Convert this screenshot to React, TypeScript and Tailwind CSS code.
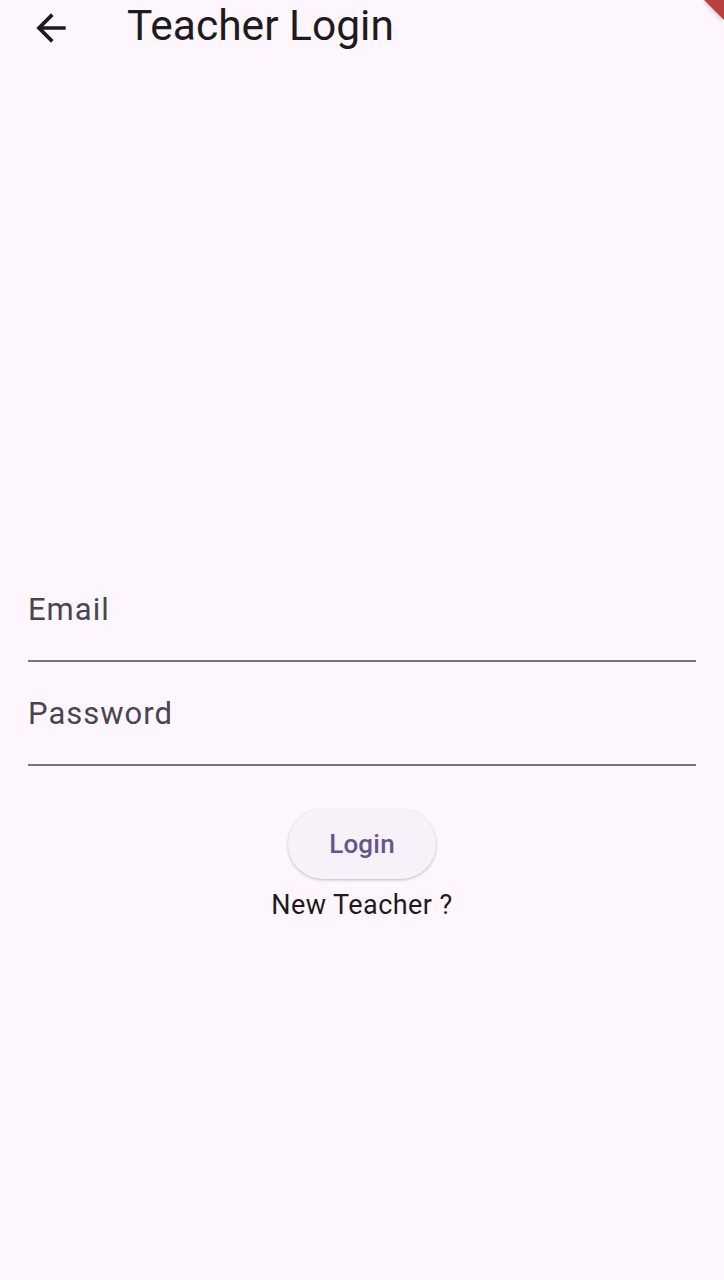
const Field = ({ label, first }: { label: string; first?: boolean }) => (
  <div
    className={`border-b-2 border-[#79747e] ${first ? "h-[96px] pt-[28px]" : "h-[104px] pt-[36px]"}`}
  >
    <div className="text-[31px] leading-none tracking-[1px] text-[#49454f]">{label}</div>
  </div>
);

const App = () => {
  return (
    <div
      className="relative min-h-[1280px] w-full overflow-hidden bg-[#fdf7fd]"
      style={{ fontFamily: "Roboto, 'Noto Sans', sans-serif" }}
    >
      {/* App bar */}
      <header className="flex items-start pt-[5px]">
        <button className="ml-[29px] mt-[1px] h-[44px] w-[44px] text-[#1d1b20]">
          <svg viewBox="0 0 24 24" className="h-[44px] w-[44px]" fill="currentColor">
            <path d="M20 11H7.83l5.59-5.59L12 4l-8 8 8 8 1.41-1.41L7.83 13H20v-2z" />
          </svg>
        </button>
        <h1 className="ml-[54px] text-[42.5px] leading-none text-[#1d1b20]">Teacher Login</h1>
      </header>

      {/* Form */}
      <main className="mt-[516px] px-[28px]">
        <Field label="Email" first />
        <Field label="Password" />

        <div className="flex flex-col items-center">
          <button className="mt-[43px] h-[70px] w-[148px] rounded-full bg-[#f7f1fa] text-[26px] font-medium tracking-[0.2px] text-[#65558f] shadow-[0_1px_3px_rgba(0,0,0,0.25)]">
            Login
          </button>
          <p className="mt-[13px] text-[27px] leading-none tracking-[0.45px] text-[#1d1b20]">
            New Teacher ?
          </p>
        </div>
      </main>

      {/* Debug banner corner */}
      <svg
        className="absolute right-0 top-0 h-[20px] w-[20px]"
        viewBox="0 0 20 20"
        style={{ filter: "drop-shadow(-1px 1px 2px rgba(0,0,0,0.2))" }}
      >
        <polygon points="0,0 20,0 20,20" fill="#b8403d" />
      </svg>
    </div>
  );
};

export default App;
